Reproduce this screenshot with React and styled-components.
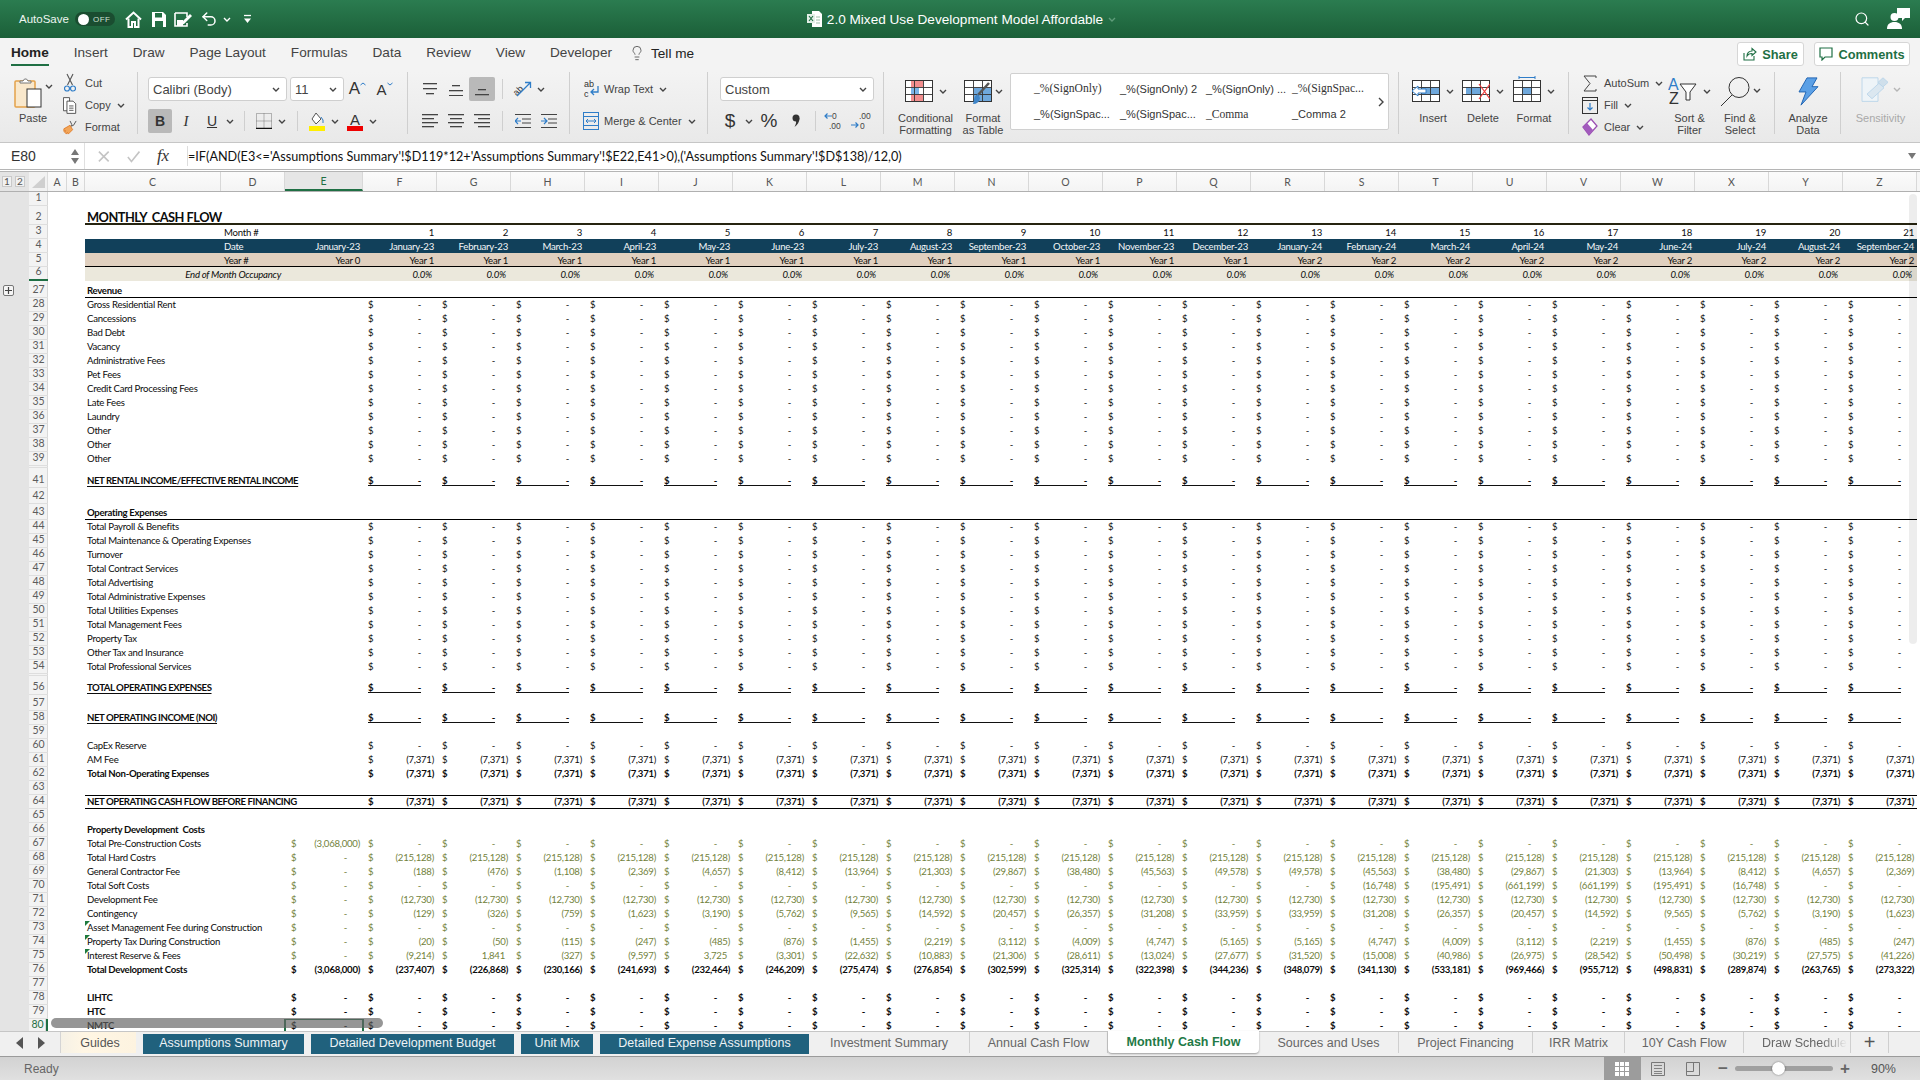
import React from 'react';
import styled, { createGlobalStyle } from 'styled-components';
import { Undo2, Search, Lightbulb } from 'lucide-react';

const UI = '"Liberation Sans", Arial, sans-serif';
const SHEET = 'Lato, "Open Sans", sans-serif';

const Global = createGlobalStyle`
  html, body { margin: 0; padding: 0; background: #fff; overflow: hidden; }
  * { box-sizing: border-box; }
`;

const Page = styled.div`
  width: 1920px; height: 1080px; display: flex; flex-direction: column; overflow: hidden;
  font-family: ${UI}; color: #333; position: relative;
`;

/* ---------- title bar ---------- */
const TitleBar = styled.header`
  height: 38px; flex: none; display: grid; grid-template-columns: 1fr auto 1fr; align-items: center;
  background: linear-gradient(#2b7c50, #1b5f38); color: #fff;
`;
const TitleLeft = styled.div`display: flex; align-items: center; padding-left: 19px;`;
const AutoSave = styled.span`font-size: 11.5px; width: 56px; color: #eef5f0;`;
const Toggle = styled.span`
  width: 40px; height: 14px; border-radius: 7px; background: #1a4d30; display: flex; align-items: center;
  padding-left: 2px; gap: 4px; font-size: 8px; letter-spacing: .5px; color: #cfe0d5;
  &::before { content: ''; width: 11px; height: 11px; border-radius: 50%; background: #fff; margin-left: 1px; }
`;
const TitleIcon = styled.span`
  width: ${p => p.$w || 25}px; margin-left: ${p => p.$ml || 0}px; display: flex; justify-content: center; align-items: center;
`;
const TitleCenter = styled.div`display: flex; align-items: center; gap: 5px; font-size: 13.6px; padding-left: 3px;`;
const TitleRight = styled.div`display: flex; align-items: center; justify-content: flex-end; gap: 16px; padding-right: 9px;`;

/* ---------- ribbon tabs ---------- */
const TabsRow = styled.div`
  height: 34px; flex: none; display: flex; padding: 4px 10px 0 11px; gap: 25px; background: #f3f3f3;
`;
const RibbonTab = styled.span`
  height: 24px; line-height: 22px; font-size: 13.6px; color: ${p => p.$active ? '#222' : '#444'};
  font-weight: ${p => p.$active ? 700 : 400}; border-bottom: 2px solid ${p => p.$active ? '#1f6f44' : 'transparent'};
`;
const TellMe = styled.span`
  display: flex; align-items: center; gap: 6px; height: 22px; font-size: 13.6px; color: #222; margin-left: -8px;
`;
const ShareGroup = styled.div`margin-left: auto; display: flex; gap: 10px;`;
const ShareButton = styled.span`
  height: 24px; width: ${p => p.$w}px; background: #fff; border: 1px solid #d6d6d6; border-radius: 3px; display: flex;
  align-items: center; justify-content: center; gap: 5px; font-size: 12.8px; font-weight: 700; color: #1f6f44;
`;

/* ---------- ribbon ---------- */
const Ribbon = styled.div`
  height: 71px; flex: none; display: flex; align-items: flex-start; background: linear-gradient(#f3f3f3, #e9e9e9);
  border-bottom: 1px solid #c6c6c6;
`;
const Group = styled.div`
  width: ${p => p.$w}px; height: 62px; flex: none; display: flex; padding-left: ${p => p.$pl || 0}px;
  border-right: ${p => p.$last ? 'none' : '1px solid #cfcfcf'};
`;
const Stack = styled.div`display: flex; flex-direction: column; padding-top: 5px; gap: 8px;`;
const ToolRow = styled.div`display: flex; align-items: center; height: 24px; flex: none;`;
const Big = styled.div`
  width: ${p => p.$w}px; margin-left: ${p => p.$ml || 0}px; flex: none; display: flex; flex-direction: column; align-items: center; padding-top: 6px;
`;
const BigIcon = styled.div`
  height: ${p => 34 - (p.$shift || 0)}px; margin-top: ${p => p.$shift || 0}px; flex: none; display: flex; align-items: flex-start; gap: ${p => p.$gap ?? 6}px;
`;
const ChevBox = styled.span`height: ${p => p.$h || 22}px; display: flex; align-items: center;`;
const BigLabel = styled.div`
  font-size: 11px; line-height: 12px; text-align: center; white-space: nowrap; color: ${p => p.$muted ? '#a9a9a9' : '#444'};
`;
const SmallCol = styled.div`display: flex; flex-direction: column; flex: none; margin-left: ${p => p.$ml || 0}px; width: ${p => p.$w ? p.$w + 'px' : 'auto'};`;
const SmallRow = styled.div`display: flex; align-items: center; height: 22px; flex: none; font-size: 11px; color: #444; white-space: nowrap;`;
const SmallIcon = styled.span`width: ${p => p.$w || 14}px; margin-right: ${p => p.$mr || 8}px; display: flex; justify-content: center; align-items: center;`;
const ChevAfter = styled.span`margin-left: ${p => p.$ml || 6}px; display: flex; align-items: center;`;
const SelectBox = styled.div`
  width: ${p => p.$w}px; margin-left: ${p => p.$ml || 0}px; height: 24px; background: #fff; border: 1px solid #cfcfcf; border-radius: 3px;
  display: flex; align-items: center; justify-content: space-between; padding: 0 6px 0 4px; font-size: 13px; color: #444; flex: none;
`;
const Cell = styled.span`
  width: ${p => p.$w || 24}px; margin-left: ${p => p.$ml || 0}px; height: 24px; flex: none; display: flex; align-items: center; justify-content: center;
  border-radius: 2px; background: ${p => p.$on ? '#b9b9b9' : 'transparent'}; font-size: ${p => p.$fs || 14}px; color: #333;
  font-weight: ${p => p.$b ? 700 : 400}; font-style: ${p => p.$i ? 'italic' : 'normal'}; font-family: ${p => p.$serif ? '"Liberation Serif", serif' : 'inherit'};
  text-decoration: ${p => p.$u ? 'underline' : 'none'};
`;
const Divider = styled.span`width: 1px; height: 20px; background: #cfcfcf; margin-left: ${p => p.$ml || 0}px; flex: none;`;
const Gallery = styled.div`
  width: 379px; height: 57px; margin: 1px 0 0 2px; background: #fff; border: 1px solid #d0d0d0; border-radius: 2px; flex: none;
  display: grid; grid-template-columns: repeat(4, 86px) 1fr; grid-template-rows: 1fr 1fr; padding: 2px 0 2px 23px; align-items: center;
`;
const StyleName = styled.span`
  font-size: ${p => p.$serif ? 11.6 : 11}px; font-family: ${p => p.$serif ? '"Liberation Serif", serif' : UI}; color: #333; white-space: nowrap;
`;
const GalleryArrow = styled.span`grid-column: 5; grid-row: 1 / span 2; justify-self: end; margin-right: 5px; display: flex;`;

/* ---------- formula bar ---------- */
const FormulaBar = styled.div`
  height: 29px; flex: none; display: flex; background: #fff; border-bottom: 3px double #b5b5b5; align-items: stretch;
`;
const NameBox = styled.div`
  width: 85px; border-right: 1px solid #e0e0e0; display: flex; align-items: center; justify-content: space-between; padding: 0 5px 0 11px;
  font-size: 14px; color: #333;
`;
const Stepper = styled.span`display: flex; flex-direction: column; gap: 3px;`;
const FormulaTools = styled.div`width: 103px; display: flex; align-items: center; padding-left: 13px; gap: 17px; flex: none;`;
const FxGlyph = styled.span`font-family: "Liberation Serif", serif; font-style: italic; font-size: 17px; color: #333; width: 16px;`;
const FxSep = styled.span`width: 1px; height: 20px; background: #ddd; margin-left: -1px;`;
const FormulaText = styled.div`
  flex: 1; font-family: ${SHEET}; font-size: 12.65px; letter-spacing: 0; color: #111; white-space: nowrap; display: flex; align-items: center;
`;
const FormulaDrop = styled.span`margin-right: 4px; display: flex; align-items: center;`;

/* ---------- sheet ---------- */
const TEMPLATE = '29px 19px 19px 18px 136px 64px 78px repeat(21, 74px)';
const ColHeader = styled.div`
  height: 20px; flex: none; display: grid; grid-template-columns: ${TEMPLATE}; background: #f6f6f6; border-bottom: 1px solid #b0b0b0;
`;
const OutlineTop = styled.div`background: #e4e4e4; display: flex; align-items: center; padding-left: 2px; gap: 3px;`;
const LevelBtn = styled.span`
  width: 10px; height: 11px; background: #f1f1f1; border: 1px solid #c9c9c9; font: 10px/9px ${SHEET}; text-align: center; color: #555;
`;
const Corner = styled.div`display: flex; align-items: center; justify-content: center; background: #f2f2f2; border-right: 1px solid #ddd;`;
const ColCell = styled.div`
  display: flex; align-items: center; justify-content: center; font: 10.5px ${SHEET};
  color: ${p => p.$on ? '#1f6f44' : '#555'}; background: ${p => p.$on ? '#e6e6e6' : 'linear-gradient(#fbfbfb,#f4f4f4)'};
  border-right: 1px solid #d8d8d8; border-bottom: ${p => p.$on ? '2px solid #1f6f44' : 'none'};
`;
const Sheet = styled.div`flex: 1; position: relative; overflow: hidden; background: #fff; min-height: 0;`;
const RowShell = styled.div`
  height: ${p => p.$h}px; display: grid; grid-template-columns: 29px 19px 37px 1832px; overflow: hidden;
`;
const Outline = styled.div`background: #e4e4e4; display: flex; align-items: flex-end; padding: 0 0 2px 3px;`;
const PlusBtn = styled.span`
  width: 11px; height: 11px; border: 1px solid #777; border-radius: 2px; background: #f5f5f5; display: flex; align-items: center; justify-content: center;
`;
const RowNum = styled.div`
  background: #f3f3f3; display: flex; align-items: flex-end; justify-content: center; font: 10.5px/15px ${SHEET};
  color: ${p => p.$sel ? '#1f6f44' : '#5c5c5c'}; overflow: hidden;
  border-bottom: ${p => p.$green ? '2px solid #1f6f44' : '1px solid #dedede'};
  border-right: ${p => p.$sel ? '2px solid #1f6f44' : 'none'};
  box-shadow: inset -1px 0 0 #d8d8d8;
`;
const DataRow = styled.div`
  display: grid; grid-template-columns: 136px 64px 78px repeat(21, 74px); align-items: end; color: ${p => p.$color || '#0c0c0c'};
  font-family: ${SHEET}; font-size: 9.6px; letter-spacing: ${p => p.$bold ? -0.3 : -0.25}px; line-height: ${p => p.$lh || 14}px; height: 100%;
  background: ${p => p.$bg || 'transparent'}; font-weight: ${p => p.$bold ? 700 : 400}; font-style: ${p => p.$italic ? 'italic' : 'normal'};
  box-shadow: ${p => p.$lines || 'none'};
`;
const Label = styled.div`
  height: 14px; padding-left: 2px; white-space: pre; position: relative; font-weight: ${p => p.$bold ? 700 : 'inherit'};
  letter-spacing: ${p => p.$caps ? '-0.45px' : 'inherit'};
  text-decoration: ${p => p.$under ? 'underline' : 'none'}; text-underline-offset: 1.5px;
  color: ${p => p.$dark ? '#0c0c0c' : 'inherit'};
  ${p => p.$tri && `&::before { content: ''; position: absolute; left: 0; top: 0; border-style: solid; border-width: 5px 5px 0 0; border-color: #1f7a3d transparent transparent transparent; }`}
`;
const Title = styled(Label)`font-size: 12.8px; font-weight: 700; letter-spacing: -0.5px; height: 16px; line-height: 16px;`;
const TextCell = styled.div`
  height: 14px; white-space: nowrap; text-align: ${p => p.$align || 'right'};
  padding: ${p => p.$align === 'left' ? '0 0 0 3px' : `0 ${p.$pr ?? 3}px 0 0`};
  direction: ${p => p.$rtl ? 'rtl' : 'ltr'};
`;
const Acct = styled.div`
  height: 14px; display: flex; justify-content: space-between; position: relative; padding: 0 ${p => p.$pr}px 0 ${p => p.$pl || 5}px;
  font-weight: inherit;
  ${p => p.$under && `&::after { content: ''; position: absolute; left: 5px; width: 53px; bottom: 2px; height: 1px; background: #111; }`}
`;
const Selected = styled.div`
  position: absolute; inset: -1px -1px -6px -1px; border: 2px solid #1f6f44; z-index: 3;
`;
const SelCell = styled.div`position: relative; height: 14px;`;
const HScroll = styled.div`
  position: absolute; left: 51px; top: 826px; width: 332px; height: 10px; border-radius: 5px; background: rgba(100,100,100,.68); z-index: 4;
`;
const VScroll = styled.div`
  position: absolute; left: 1909px; top: 2px; width: 8px; height: 450px; border-radius: 4px; background: rgba(0,0,0,.07); z-index: 4;
`;

/* ---------- sheet tabs / status ---------- */
const TabBar = styled.div`
  height: 26px; flex: none; display: flex; background: #f0f0f0; border-top: 1px solid #c6c6c6; border-bottom: 1px solid #9b9b9b; font-size: 12.5px; z-index: 5;
`;
const NavArrows = styled.div`width: 61px; display: flex; align-items: center; justify-content: center; gap: 15px; border-right: 1px solid #d4d4d4; height: 21px; padding-left: 0;`;
const GuidesTab = styled.div`
  width: 75px; height: 21px; padding-left: 3px; display: flex; align-items: center; justify-content: center; background: linear-gradient(90deg, #f5f1e6, #fff6e4 30%, #fdf3e0); color: #555;
`;
const ColorTab = styled.div`
  width: ${p => p.$w}px; height: 20px; margin: 2px 0 0 7px; background: #20617d; color: #eef3f6; display: flex; align-items: center; justify-content: center; padding-bottom: 3px;
`;
const PlainTab = styled.div`
  width: ${p => p.$w}px; height: 21px; display: flex; align-items: center; justify-content: center; color: #666; border-right: 1px solid #cfcfcf; flex: none;
`;
const ActiveTab = styled.div`
  width: 151px; height: 22px; background: #fff; margin-top: -1px; border-radius: 0 0 4px 4px; box-shadow: 0 1px 2px rgba(0,0,0,.35); display: flex; align-items: center; justify-content: center;
  color: #1f7a47; font-weight: 700; flex: none;
`;
const FadeTab = styled(PlainTab)`justify-content: flex-start; padding-left: 18px; overflow: hidden;`;
const Fade = styled.span`
  white-space: nowrap; -webkit-mask-image: linear-gradient(90deg, #000 70%, transparent 100%); mask-image: linear-gradient(90deg, #000 70%, transparent 100%);
`;
const PlusTab = styled(PlainTab)`font-size: 20px; font-weight: 400; color: #555;`;
const StatusBar = styled.footer`
  height: 23px; flex: none; display: flex; align-items: stretch; background: linear-gradient(#d2d2d2, #e0e0e0); font-size: 12px; color: #666;
`;
const Ready = styled.span`padding-left: 24px; align-self: center;`;
const StatusRight = styled.div`margin-left: auto; display: flex; align-items: center; padding-right: 24px; color: #555;`;
const ViewBtn = styled.span`
  width: ${p => p.$w}px; height: 100%; display: flex; align-items: center; justify-content: center; background: ${p => p.$on ? '#9c9c9c' : 'transparent'}; flex: none;
`;
const ZoomStep = styled.span`width: ${p => p.$w}px; text-align: center; font-size: 17px; font-weight: 700; line-height: 17px; color: #666;`;
const Slider = styled.span`width: 98px; height: 5px; border-radius: 3px; background: #a0a0a0; position: relative; flex: none;
  &::after { content: ''; position: absolute; left: 37px; top: -4px; width: 13px; height: 13px; border-radius: 50%; background: #fff; box-shadow: 0 0 2px rgba(0,0,0,.5); }
`;
const ZoomText = styled.span`margin-left: 14px; font-size: 12.5px; color: #555;`;

/* ---------- icons ---------- */
const Chev = ({ c = '#444' }) => <svg width="8" height="5" viewBox="0 0 8 5"><path d="M1 1l3 3 3-3" fill="none" stroke={c} strokeWidth="1.4" /></svg>;
const Home = () => <svg width="19" height="19" viewBox="0 0 19 19" fill="none" stroke="#fff" strokeWidth="2"><path d="M2 9.5L9.5 2.5 17 9.5" /><path d="M4.5 8.5V17H8v-5h3v5h3.5V8.5" /></svg>;
const Save = () => <svg width="16" height="17" viewBox="0 0 16 17"><path fill="#fff" d="M1 1h11l3 3v12H1z" /><rect x="4" y="2" width="7" height="4.5" fill="#236e44" /><rect x="4" y="10" width="8" height="6" fill="#236e44" /></svg>;
const SaveAs = () => <svg width="19" height="17" viewBox="0 0 19 17" fill="none"><path d="M1 2h12v4M1 2v13h12v-3" stroke="#fff" strokeWidth="1.6" /><rect x="3" y="9" width="6" height="6" fill="#fff" /><path d="M8 11l8-8 2 2-8 8-3 1z" fill="#fff" /></svg>;
const DocX = () => <svg width="15" height="16" viewBox="0 0 15 16"><path fill="#fff" d="M5 0h7l3 3v13H5z" /><rect x="0" y="3" width="8" height="9" fill="#e3efe7" /><path d="M2 5l4 5M6 5l-4 5" stroke="#1f6f44" strokeWidth="1.2" /><path d="M9 6h4M9 9h4M9 12h4" stroke="#9dbfa9" /></svg>;
const Customize = () => <svg width="9" height="11" viewBox="0 0 9 11"><path d="M1 1.5h7" stroke="#fff" strokeWidth="1.3" /><path d="M1 4.5h7L4.5 9z" fill="#fff" /></svg>;
const Person = () => <svg width="25" height="22" viewBox="0 0 25 22"><path fill="#fff" d="M11 0h13v10h-5l-3 3v-3h-5z" /><circle cx="8.5" cy="9" r="4" fill="#fff" /><path fill="#fff" d="M1 21c0-5 3-7 7.500-7s7.500 2 7.500 7z" /></svg>;
const ShareIco = () => <svg width="14" height="14" viewBox="0 0 14 14" fill="none" stroke="#1f6f44" strokeWidth="1.1"><path d="M1 6v7h10V9" /><path d="M4 9c0-3 2-5 5-5V1.500l4 3.500-4 3.500V6.500c-2 0-4 .8-5 2.500z" /></svg>;
const CommentIco = () => <svg width="14" height="14" viewBox="0 0 14 14" fill="none" stroke="#1f6f44" strokeWidth="1.2"><path d="M1 1h12v9H6l-3 3v-3H1z" /></svg>;
const PasteIco = () => <svg width="28" height="30" viewBox="0 0 28 30"><rect x="1" y="3" width="20" height="26" rx="1" fill="#f9e8cc" stroke="#e3a14a" strokeWidth="1.5" /><path d="M6 5V3h3l1.500-2h2L14 3h3v2z" fill="#fff" stroke="#777" /><rect x="13" y="11" width="14" height="18" fill="#fff" stroke="#333" /></svg>;
const CutIco = () => <svg width="12" height="20" viewBox="0 0 12 20" fill="none"><path d="M3 1l5.500 11M9 1L3.500 12" stroke="#555" strokeWidth="1.1" /><circle cx="3" cy="15.500" r="2.500" stroke="#2f7dc8" strokeWidth="1.2" /><circle cx="9" cy="15.500" r="2.500" stroke="#2f7dc8" strokeWidth="1.200" /></svg>;
const CopyIco = () => <svg width="16" height="19" viewBox="0 0 16 19" fill="#fff" stroke="#444"><path d="M.5.500h7v15h-7z" /><path d="M4.500 4.500h7l3 3v11h-10z" /><path d="M7 10h5M7 12.500h5M7 15h5" fill="none" /></svg>;
const PainterIco = () => <svg width="16" height="17" viewBox="0 0 16 17"><path d="M8 1l2 4-1 2 3-1 3-5" fill="none" stroke="#555" strokeWidth="1.100" /><path d="M1 10l7-4 3 5-5 5-1-2-1 2-2-2 1-2-2 1z" fill="#f2a65a" stroke="#e07b28" /></svg>;
const FontGrow = ({ down }) => <Cell $w={27} $fs={down ? 15 : 17}>A<svg width="6" height="4" viewBox="0 0 6 4" style={{ alignSelf: 'flex-start', marginTop: 5 }}><path d={down ? 'M.5 1L3 3l2.500-2' : 'M.5 3L3 1l2.500 2'} fill="none" stroke="#2f7dc8" /></svg></Cell>;
const BorderIco = () => <svg width="16" height="16" viewBox="0 0 16 16" fill="none"><path d="M.5.500h15v15H.5z M8 .5v15 M.5 8h15" stroke="#777" strokeDasharray="1 1" /><path d="M0 15.500h16" stroke="#111" strokeWidth="1.500" /></svg>;
const FillIco = () => <svg width="18" height="19" viewBox="0 0 18 19"><path d="M8 1l5 6-5 5-4-5z" fill="#fff" stroke="#555" /><path d="M13 5q3 3 2 6" stroke="#2f7dc8" fill="none" /><rect x="1" y="14" width="16" height="5" fill="#ffee00" /></svg>;
const ColorA = () => <svg width="18" height="19" viewBox="0 0 18 19"><text x="9" y="12.500" fontSize="15" textAnchor="middle" fill="#333" fontFamily={UI}>A</text><rect x="1" y="14" width="16" height="5" fill="#ee0000" /></svg>;
const Lines = ({ ys, ws = [], w = 16, anchor = 'left', h = 14 }) => (
  <svg width={w} height={h} viewBox={`0 0 ${w} ${h}`}>
    {ys.map((y, i) => {
      const l = ws[i] ?? w;
      const x = anchor === 'left' ? 0 : anchor === 'right' ? w - l : (w - l) / 2;
      return <rect key={i} x={x} y={y} width={l} height="1.300" fill="#444" />;
    })}
  </svg>
);
const OrientIco = () => <svg width="20" height="18" viewBox="0 0 20 18"><text x="1" y="14" fontSize="9" fill="#333" fontFamily={UI} transform="rotate(-45 5 12)">ab</text><path d="M4 16L17 3M12 2.500h5.500V8" fill="none" stroke="#2f7dc8" strokeWidth="1.300" /></svg>;
const IndentIco = ({ out }) => <svg width="16" height="14" viewBox="0 0 16 14"><path d="M0 .5h16M7 5h9M7 9h9M0 13.500h16" stroke="#444" /><path d={out ? 'M6 7H0M3 4L0 7l3 3' : 'M0 7h6M3 4l3 3-3 3'} fill="none" stroke="#2f7dc8" strokeWidth="1.200" /></svg>;
const WrapIco = () => <svg width="18" height="20" viewBox="0 0 18 20"><text x="2" y="8" fontSize="9" fill="#333" fontFamily={UI}>ab</text><text x="2" y="18" fontSize="9" fill="#333" fontFamily={UI}>c</text><path d="M16 7v6h-7M12 10l-3 3 3 3" fill="none" stroke="#2f7dc8" strokeWidth="1.300" /></svg>;
const MergeIco = () => <svg width="16" height="18" viewBox="0 0 16 18" fill="none"><rect x=".5" y=".5" width="15" height="17" stroke="#2f7dc8" /><path d="M0 4.500h16M0 13.500h16" stroke="#2f7dc8" /><path d="M3 9h10M5 7L3 9l2 2M11 7l2 2-2 2" stroke="#2f7dc8" /></svg>;
const CommaIco = () => <svg width="9" height="14" viewBox="0 0 9 14"><circle cx="5" cy="4" r="3.500" fill="#333" /><path d="M8.500 4c0 4-2 7-5 9 1-2 2-4 1.500-6z" fill="#333" /></svg>;
const DecIco = ({ more }) => <svg width="24" height="20" viewBox="0 0 24 20"><text x="9" y="8" fontSize="8.500" fill="#444" fontFamily={UI}>{more ? '0' : '.00'}</text><text x={more ? 6 : 10} y="18" fontSize="8.500" fill="#444" fontFamily={UI}>{more ? '.00' : '0'}</text><path d={more ? 'M9 5H2M4.500 2.500L2 5l2.500 2.500' : 'M1 14h7M5.500 11.500L8 14l-2.500 2.500'} fill="none" stroke="#2f7dc8" strokeWidth="1.200" /></svg>;
const GridLines = ({ h = 22, y0 = 0 }) => (<>
  <rect x=".5" y={y0 + .5} width="27" height={h - 1} fill="none" stroke="#333" />
  <path d={`M9.500 ${y0}V${y0 + h}M18.500 ${y0}V${y0 + h}M0 ${y0 + 7.5}H28M0 ${y0 + 14.5}H28`} stroke="#333" fill="none" strokeWidth=".9" />
</>);
const CondIco = () => <svg width="28" height="22" viewBox="0 0 28 22"><rect width="28" height="22" fill="#fff" /><path fill="#f28e8e" d="M6 0h12v7H6zM6 14h12v8H6z" /><rect x="6" y="8" width="8" height="6" fill="#7ab5e8" /><GridLines /></svg>;
const TableIco = () => <svg width="28" height="25" viewBox="0 0 28 25"><rect width="28" height="22" fill="#fff" /><path fill="#6fa8dc" d="M10 8h17v13H10z" /><GridLines /><path d="M25 3L13 16" stroke="#555" strokeWidth="2.500" /><path d="M14 14q-4 2-4 6l-1 4q6 0 7-6z" fill="#3f85c8" /></svg>;
const InsertIco = () => <svg width="28" height="26" viewBox="0 0 28 26"><rect width="28" height="22" fill="#fff" /><rect x="9" y="7" width="19" height="8" fill="#6fa8dc" /><GridLines /><path d="M14 9H6V6L0 11l6 5v-3h8z" fill="#fff" stroke="#2f7dc8" /></svg>;
const DeleteIco = () => <svg width="28" height="26" viewBox="0 0 28 26"><rect width="28" height="22" fill="#fff" /><rect x="4" y="7" width="15" height="8" fill="#6fa8dc" /><GridLines /><path d="M17 4l11 15M28 4L17 19" stroke="#ee3b3b" strokeWidth="1.200" /></svg>;
const FormatIco = () => <svg width="28" height="30" viewBox="0 0 28 30"><path d="M6 1.500h16M6 0v3M22 0v3" stroke="#2f7dc8" /><rect y="4" width="28" height="22" fill="#fff" /><rect x="9" y="11" width="10" height="8" fill="#6fa8dc" /><GridLines y0={4} /></svg>;
const SigmaIco = () => <svg width="14" height="17" viewBox="0 0 14 17" fill="none"><path d="M13 3V1H1l6 7.500L1 16h12v-2" stroke="#444" /></svg>;
const FillDown = () => <svg width="16" height="17" viewBox="0 0 16 17" fill="none"><rect x=".5" y=".5" width="15" height="16" stroke="#333" /><path d="M0 3.500h16" stroke="#333" /><path d="M8 6v7M5.500 10.500L8 13l2.500-2.500" stroke="#2f7dc8" strokeWidth="1.200" /></svg>;
const EraserIco = () => <svg width="16" height="18" viewBox="0 0 16 18"><path d="M1 9l8-8 6 7-8 9z" fill="#fff" stroke="#9b4fb3" strokeWidth="1.300" /><path d="M1 9l4-4 6 7-4 5z" fill="#a25bbd" /></svg>;
const SortIco = () => <svg width="30" height="28" viewBox="0 0 30 28"><text x="0" y="12" fontSize="16" fill="#2f7dc8" fontFamily={UI}>A</text><text x="1" y="26" fontSize="16" fill="#333" fontFamily={UI}>Z</text><path d="M12 6h16l-6 8v8h-4v-8z" fill="#fff" stroke="#333" /></svg>;
const FindIco = () => <svg width="30" height="30" viewBox="0 0 30 30" fill="none"><circle cx="19" cy="10.500" r="10" stroke="#333" /><path d="M12 18L1 29" stroke="#333" /></svg>;
const BoltIco = () => <svg width="22" height="29" viewBox="0 0 22 33" preserveAspectRatio="none"><path d="M10 1h10l-5 10h6L4 32l5-15H2z" fill="#5ba0e6" stroke="#1d61b0" /></svg>;
const SensIco = () => <svg width="28" height="29" viewBox="0 0 28 32" fill="none" preserveAspectRatio="none"><path d="M1 2h16v26H1z" fill="#eef4f8" stroke="#bcd6ea" /><path d="M6 20L18 8l5 5-12 12z" fill="#dbe7f0" stroke="#bcd6ea" /><path d="M17 7l5-5 5 5-5 5z" fill="#cfdfeb" stroke="#bcd6ea" /></svg>;
const GridView = () => <svg width="14" height="14" viewBox="0 0 14 14"><path fill="#fff" d="M0 0h4v4H0zM5 0h4v4H5zM10 0h4v4h-4zM0 5h4v4H0zM5 5h4v4H5zM10 5h4v4h-4zM0 10h4v4H0zM5 10h4v4H5zM10 10h4v4h-4z" /></svg>;
const PageView = () => <svg width="14" height="14" viewBox="0 0 14 14" fill="none" stroke="#777"><path d="M.5.5h13v13H.5z" /><path d="M3 3.500h8M3 6.500h8M3 9.500h8M3 11.500h8" strokeWidth=".9" /></svg>;
const BreakView = () => <svg width="14" height="14" viewBox="0 0 14 14" fill="none" stroke="#777"><path d="M.5.5h13v13H.5zM.5 9.500h7V.5" /></svg>;
const NavLeft = () => <svg width="7" height="12" viewBox="0 0 7 12"><path d="M7 0v12L0 6z" fill="#555" /></svg>;
const NavRight = () => <svg width="7" height="12" viewBox="0 0 7 12"><path d="M0 0v12l7-6z" fill="#555" /></svg>;
const ArrowR = () => <svg width="6" height="10" viewBox="0 0 6 10"><path d="M1 1l4 4-4 4" fill="none" stroke="#444" strokeWidth="1.400" /></svg>;
const Tri = ({ up }) => <svg width="8" height="6" viewBox="0 0 8 6"><path d={up ? 'M4 0l4 6H0z' : 'M0 0h8L4 6z'} fill="#777" /></svg>;
const Plus = () => <svg width="7" height="7" viewBox="0 0 7 7"><path d="M3.500 0v7M0 3.500h7" stroke="#444" strokeWidth="1.200" /></svg>;

/* ---------- data ---------- */
const COLS = 'FGHIJKLMNOPQRSTUVWXYZ'.split('');
const MONTHS = ['January-23','February-23','March-23','April-23','May-23','June-23','July-23','August-23','September-23','October-23','November-23','December-23','January-24','February-24','March-24','April-24','May-24','June-24','July-24','August-24','September-24'];
const fmt = v => { if (v === 0) return '-'; const s = Math.abs(v).toLocaleString('en-US'); return v < 0 ? `(${s})` : s; };
const neg = a => a.map(v => -v);
const dashes = Array(21).fill(0);
const same = v => Array(21).fill(v);
const NEG7371 = same(-7371);
const OLIVE = '#72823c';
const B = '#000';
const lineBottom = (w = 1, c = B) => `inset 0 -${w}px 0 ${c}`;

const rowsData = [
  { n: 1, h: 14 },
  { n: 2, h: 19, kind: 'title', lines: lineBottom(2, '#262410') },
  { n: 3, h: 14, kind: 'head', d: 'Month #', e: '', months: MONTHS.map((_, i) => String(i + 1)) },
  { n: 4, h: 14, kind: 'head', d: 'Date', e: 'January-23', months: MONTHS, bg: '#11405a', color: '#f4f7f8' },
  { n: 5, h: 14, kind: 'head', d: 'Year #', e: 'Year 0', months: MONTHS.map((_, i) => i < 12 ? 'Year 1' : 'Year 2'), bg: '#e0d0bf', lines: lineBottom() },
  { n: 6, h: 14, kind: 'occ', bg: '#ebe8dc', green: true },
  { n: 27, h: 17, label: 'Revenue', bold: true, lines: lineBottom(), plus: true },
  ...['Gross Residential Rent','Cancessions','Bad Debt','Vacancy','Administrative Fees','Pet Fees','Credit Card Processing Fees','Late Fees','Laundry','Other','Other','Other'].map((label, i) => ({ n: 28 + i, h: 14, label, vals: dashes })),
  { n: 40, h: 2 },
  { n: 41, h: 20, label: 'NET RENTAL INCOME/EFFECTIVE RENTAL INCOME', bold: true, caps: true, under: true, vals: dashes },
  { n: 42, h: 16 },
  { n: 43, h: 16, label: 'Operating Expenses', bold: true, lines: lineBottom() },
  ...['Total Payroll & Benefits','Total Maintenance & Operating Expenses','Turnover','Total Contract Services','Total Advertising','Total Administrative Expenses','Total Utilities Expenses','Total Management Fees','Property Tax','Other Tax and Insurance','Total Professional Services'].map((label, i) => ({ n: 44 + i, h: 14, label, vals: dashes })),
  { n: 55, h: 2 },
  { n: 56, h: 19, label: 'TOTAL OPERATING EXPENSES', bold: true, caps: true, under: true, vals: dashes },
  { n: 57, h: 16 },
  { n: 58, h: 14, label: 'NET OPERATING INCOME (NOI)', bold: true, caps: true, under: true, vals: dashes },
  { n: 59, h: 14 },
  { n: 60, h: 14, label: 'CapEx Reserve', vals: dashes },
  { n: 61, h: 14, label: 'AM Fee', vals: NEG7371 },
  { n: 62, h: 14, label: 'Total Non-Operating Expenses', bold: true, vals: NEG7371 },
  { n: 63, h: 14 },
  { n: 64, h: 14, label: 'NET OPERATING CASH FLOW BEFORE FINANCING', bold: true, caps: true, vals: NEG7371, lines: `inset 0 1px 0 ${B}, inset 0 -1px 0 ${B}` },
  { n: 65, h: 14 },
  { n: 66, h: 14, label: 'Property Development  Costs', bold: true },
  { n: 67, h: 14, label: 'Total Pre-Construction Costs', color: OLIVE, dark: true, e: -3068000, vals: dashes },
  { n: 68, h: 14, label: 'Total Hard Costrs', color: OLIVE, dark: true, e: 0, vals: same(-215128) },
  { n: 69, h: 14, label: 'General Contractor Fee', color: OLIVE, dark: true, e: 0, vals: neg([188,476,1108,2369,4657,8412,13964,21303,29867,38480,45563,49578,49578,45563,38480,29867,21303,13964,8412,4657,2369]) },
  { n: 70, h: 14, label: 'Total Soft Costs', color: OLIVE, dark: true, e: 0, vals: neg([0,0,0,0,0,0,0,0,0,0,0,0,0,16748,195491,661199,661199,195491,16748,0,0]) },
  { n: 71, h: 14, label: 'Development Fee', color: OLIVE, dark: true, e: 0, vals: same(-12730) },
  { n: 72, h: 14, label: 'Contingency', color: OLIVE, dark: true, e: 0, vals: neg([129,326,759,1623,3190,5762,9565,14592,20457,26357,31208,33959,33959,31208,26357,20457,14592,9565,5762,3190,1623]) },
  { n: 73, h: 14, label: 'Asset Management Fee during Construction', tri: true, color: OLIVE, dark: true, e: 0, vals: dashes },
  { n: 74, h: 14, label: 'Property Tax During Construction', tri: true, color: OLIVE, dark: true, e: 0, vals: neg([20,50,115,247,485,876,1455,2219,3112,4009,4747,5165,5165,4747,4009,3112,2219,1455,876,485,247]) },
  { n: 75, h: 14, label: 'Interest Reserve & Fees', tri: true, color: OLIVE, dark: true, e: 0, vals: [-9214,1841,-327,-9597,3725,-3301,-22632,-10883,-21306,-28611,-13024,-27677,-31520,-15008,-40986,-26975,-28542,-50498,-30219,-27575,-41226] },
  { n: 76, h: 14, label: 'Total Development Costs', bold: true, e: -3068000, vals: neg([237407,226868,230166,241693,232464,246209,275474,276854,302599,325314,322398,344236,348079,341130,533181,969466,955712,498831,289874,263765,273322]) },
  { n: 77, h: 14 },
  { n: 78, h: 14, label: 'LIHTC', bold: true, e: 0, vals: dashes },
  { n: 79, h: 14, label: 'HTC', bold: true, e: 0, vals: dashes },
  { n: 80, h: 14, label: 'NMTC', bold: true, e: 0, vals: dashes, sel: true },
];

const padFor = v => (v === 0 ? 16 : v < 0 ? 3 : 6);
const Money = ({ v, under, pl }) => (
  <Acct $pr={padFor(v)} $pl={pl} $under={under}><span>$</span><span>{fmt(v)}</span></Acct>
);

const SheetRow = ({ r }) => {
  const { n, h } = r;
  let body = null;
  if (r.kind === 'title') {
    body = <DataRow $lines={r.lines}><Title>{'MONTHLY  CASH FLOW'}</Title></DataRow>;
  } else if (r.kind === 'head') {
    body = (
      <DataRow $lh={15} $bg={r.bg} $color={r.color} $lines={r.lines}>
        <div />
        <TextCell $align="left">{r.d}</TextCell>
        <TextCell>{r.e}</TextCell>
        {r.months.map((m, i) => <TextCell key={i}>{m}</TextCell>)}
      </DataRow>
    );
  } else if (r.kind === 'occ') {
    body = (
      <DataRow $lh={15} $bg={r.bg} $italic>
        <div />
        <TextCell $rtl $pr={4}><bdi>End of Month Occupancy</bdi></TextCell>
        <div />
        {COLS.map(c => <TextCell key={c} $pr={5}>0.0%</TextCell>)}
      </DataRow>
    );
  } else {
    body = (
      <DataRow $lines={r.lines} $color={r.color} $bold={r.bold}>
        {r.label
          ? <Label $tri={r.tri} $under={r.under} $dark={r.dark} $caps={r.caps}>{r.label}</Label>
          : <div />}
        <div />
        {r.e === undefined ? <div /> : r.sel ? <SelCell><Money v={r.e} pl={6} /><Selected /></SelCell> : <Money v={r.e} pl={6} />}
        {r.vals && r.vals.map((v, i) => <Money key={i} v={v} under={r.under} />)}
      </DataRow>
    );
  }
  return (
    <RowShell $h={h}>
      <Outline>{r.plus && <PlusBtn><Plus /></PlusBtn>}</Outline>
      <RowNum $sel={r.sel} $green={r.green}>{n}</RowNum>
      <div />
      {body}
    </RowShell>
  );
};

const HEAD = ['A','B','C','D','E',...COLS];
const FORMULA = "=IF(AND(E3<='Assumptions Summary'!$D119*12+'Assumptions Summary'!$E22,E41>0),('Assumptions Summary'!$D$138)/12,0)";

export default function App() {
  return (
    <Page>
      <Global />
      <TitleBar>
        <TitleLeft>
          <AutoSave>AutoSave</AutoSave>
          <Toggle>OFF</Toggle>
          <TitleIcon $ml={6}><Home /></TitleIcon>
          <TitleIcon><Save /></TitleIcon>
          <TitleIcon><SaveAs /></TitleIcon>
          <TitleIcon><Undo2 size={18} color="#fff" strokeWidth={2} /></TitleIcon>
          <TitleIcon $w={11}><Chev c="#fff" /></TitleIcon>
          <TitleIcon $w={30}><Customize /></TitleIcon>
        </TitleLeft>
        <TitleCenter>
          <DocX />
          <span>2.0 Mixed Use Development Model Affordable</span>
          <Chev c="#5f9c7a" />
        </TitleCenter>
        <TitleRight>
          <Search size={16} color="#fff" strokeWidth={1.8} />
          <Person />
        </TitleRight>
      </TitleBar>

      <TabsRow>
        <RibbonTab $active>Home</RibbonTab>
        {['Insert','Draw','Page Layout','Formulas','Data','Review','View','Developer'].map(t => <RibbonTab key={t}>{t}</RibbonTab>)}
        <TellMe><Lightbulb size={16} color="#555" strokeWidth={1.3} />Tell me</TellMe>
        <ShareGroup>
          <ShareButton $w={67}><ShareIco />Share</ShareButton>
          <ShareButton $w={96}><CommentIco />Comments</ShareButton>
        </ShareGroup>
      </TabsRow>

      <Ribbon>
        <Group $w={138} $pl={7}>
          <Big $w={52}>
            <BigIcon $gap={3}><PasteIco /><ChevBox $h={16}><Chev /></ChevBox></BigIcon>
            <BigLabel>Paste</BigLabel>
          </Big>
          <SmallCol $ml={4}>
            <SmallRow><SmallIcon><CutIco /></SmallIcon>Cut</SmallRow>
            <SmallRow><SmallIcon><CopyIco /></SmallIcon>Copy<ChevAfter><Chev /></ChevAfter></SmallRow>
            <SmallRow><SmallIcon><PainterIco /></SmallIcon>Format</SmallRow>
          </SmallCol>
        </Group>

        <Group $w={270} $pl={10}>
          <Stack>
            <ToolRow>
              <SelectBox $w={139}>Calibri (Body)<Chev /></SelectBox>
              <SelectBox $w={54} $ml={3}>11<Chev /></SelectBox>
              <FontGrow />
              <FontGrow down />
            </ToolRow>
            <ToolRow>
              <Cell $on $b>B</Cell>
              <Cell $w={28} $i $serif $fs={15}>I</Cell>
              <Cell $u>U</Cell>
              <Cell $w={12}><Chev /></Cell>
              <Divider $ml={8} />
              <Cell $ml={7}><BorderIco /></Cell>
              <Cell $w={12}><Chev /></Cell>
              <Divider $ml={9} />
              <Cell $ml={7}><FillIco /></Cell>
              <Cell $w={12}><Chev /></Cell>
              <Cell $ml={2}><ColorA /></Cell>
              <Cell $w={12}><Chev /></Cell>
            </ToolRow>
          </Stack>
        </Group>

        <Group $w={162} $pl={9}>
          <Stack>
            <ToolRow>
              <Cell $w={26}><Lines ys={[1, 6, 11]} ws={[14, 14, 8]} anchor="center" /></Cell>
              <Cell $w={26}><Lines ys={[3, 8, 13]} ws={[8, 14, 14]} anchor="center" /></Cell>
              <Cell $w={26} $on><Lines ys={[7, 12]} ws={[8, 14]} anchor="center" /></Cell>
              <Divider $ml={7} />
              <Cell $ml={8}><OrientIco /></Cell>
              <Cell $w={12}><Chev /></Cell>
            </ToolRow>
            <ToolRow>
              <Cell $w={26}><Lines ys={[0, 4, 8, 12]} ws={[16, 12, 16, 12]} /></Cell>
              <Cell $w={26}><Lines ys={[0, 4, 8, 12]} ws={[16, 12, 16, 12]} anchor="center" /></Cell>
              <Cell $w={26}><Lines ys={[0, 4, 8, 12]} ws={[16, 12, 16, 12]} anchor="right" /></Cell>
              <Divider $ml={7} />
              <Cell $ml={8}><IndentIco out /></Cell>
              <Cell $ml={2}><IndentIco /></Cell>
            </ToolRow>
          </Stack>
        </Group>

        <Group $w={138} $pl={12}>
          <Stack>
            <ToolRow><SmallRow><SmallIcon $w={18} $mr={4}><WrapIco /></SmallIcon>Wrap Text<ChevAfter><Chev /></ChevAfter></SmallRow></ToolRow>
            <ToolRow><SmallRow><SmallIcon $w={18} $mr={4}><MergeIco /></SmallIcon>Merge &amp; Center<ChevAfter><Chev /></ChevAfter></SmallRow></ToolRow>
          </Stack>
        </Group>

        <Group $w={176} $pl={12}>
          <Stack>
            <ToolRow><SelectBox $w={154}>Custom<Chev /></SelectBox></ToolRow>
            <ToolRow>
              <Cell $w={20} $fs={19}>$</Cell>
              <Cell $w={12} $ml={3}><Chev /></Cell>
              <Cell $ml={2} $fs={19}>%</Cell>
              <Cell $w={20} $ml={4}><CommaIco /></Cell>
              <Divider $ml={10} />
              <Cell $w={26} $ml={6}><DecIco more /></Cell>
              <Cell $w={26} $ml={1}><DecIco /></Cell>
            </ToolRow>
          </Stack>
        </Group>

        <Group $w={515} $pl={14}>
          <Big $w={55}>
            <BigIcon $shift={2}><CondIco /><ChevBox><Chev /></ChevBox></BigIcon>
            <BigLabel>Conditional<br />Formatting</BigLabel>
          </Big>
          <Big $w={50} $ml={5}>
            <BigIcon $shift={2} $gap={3}><TableIco /><ChevBox><Chev /></ChevBox></BigIcon>
            <BigLabel>Format<br />as Table</BigLabel>
          </Big>
          <Gallery>
            <StyleName $serif>_%(SignOnly)</StyleName>
            <StyleName>_%(SignOnly) 2</StyleName>
            <StyleName>_%(SignOnly) ...</StyleName>
            <StyleName $serif>_%(SignSpac...</StyleName>
            <GalleryArrow><ArrowR /></GalleryArrow>
            <StyleName>_%(SignSpac...</StyleName>
            <StyleName>_%(SignSpac...</StyleName>
            <StyleName $serif>_Comma</StyleName>
            <StyleName>_Comma 2</StyleName>
          </Gallery>
        </Group>

        <Group $w={170} $pl={9}>
          <Big $w={50}>
            <BigIcon $shift={2}><InsertIco /><ChevBox><Chev /></ChevBox></BigIcon>
            <BigLabel>Insert</BigLabel>
          </Big>
          <Big $w={50}>
            <BigIcon $shift={2}><DeleteIco /><ChevBox><Chev /></ChevBox></BigIcon>
            <BigLabel>Delete</BigLabel>
          </Big>
          <Big $w={50} $ml={1}>
            <BigIcon $shift={-2}><FormatIco /><ChevBox $h={30}><Chev /></ChevBox></BigIcon>
            <BigLabel>Format</BigLabel>
          </Big>
        </Group>

        <Group $w={206} $pl={13}>
          <SmallCol $w={85}>
            <SmallRow><SmallIcon $w={16} $mr={6}><SigmaIco /></SmallIcon>AutoSum<ChevAfter><Chev /></ChevAfter></SmallRow>
            <SmallRow><SmallIcon $w={16} $mr={6}><FillDown /></SmallIcon>Fill<ChevAfter><Chev /></ChevAfter></SmallRow>
            <SmallRow><SmallIcon $w={16} $mr={6}><EraserIco /></SmallIcon>Clear<ChevAfter><Chev /></ChevAfter></SmallRow>
          </SmallCol>
          <Big $w={45}>
            <BigIcon $gap={5}><SortIco /><ChevBox $h={26}><Chev /></ChevBox></BigIcon>
            <BigLabel>Sort &amp;<br />Filter</BigLabel>
          </Big>
          <Big $w={42} $ml={7}>
            <BigIcon $shift={-1} $gap={3}><FindIco /><ChevBox $h={26}><Chev /></ChevBox></BigIcon>
            <BigLabel>Find &amp;<br />Select</BigLabel>
          </Big>
        </Group>

        <Group $w={66}>
          <Big $w={66}>
            <BigIcon $shift={-1}><BoltIco /></BigIcon>
            <BigLabel>Analyze<br />Data</BigLabel>
          </Big>
        </Group>

        <Group $w={79} $last>
          <Big $w={79}>
            <BigIcon $shift={-2} $gap={4}><SensIco /><ChevBox $h={26}><Chev c="#b5b5b5" /></ChevBox></BigIcon>
            <BigLabel $muted>Sensitivity</BigLabel>
          </Big>
        </Group>
      </Ribbon>

      <FormulaBar>
        <NameBox>E80<Stepper><Tri up /><Tri /></Stepper></NameBox>
        <FormulaTools>
          <svg width="13" height="13" viewBox="0 0 13 13"><path d="M1 1l11 11M12 1L1 12" stroke="#c4c4c4" strokeWidth="1.800" /></svg>
          <svg width="15" height="13" viewBox="0 0 15 13" fill="none"><path d="M1 7l4 5 9-11" stroke="#c4c4c4" strokeWidth="1.800" /></svg>
          <FxGlyph>fx</FxGlyph>
          <FxSep />
        </FormulaTools>
        <FormulaText>{FORMULA}</FormulaText>
        <FormulaDrop><Tri /></FormulaDrop>
      </FormulaBar>

      <ColHeader>
        <OutlineTop><LevelBtn>1</LevelBtn><LevelBtn>2</LevelBtn></OutlineTop>
        <Corner><svg width="13" height="12" viewBox="0 0 13 12"><path d="M13 0v12H0z" fill="#cfcfcf" /></svg></Corner>
        {HEAD.map(c => <ColCell key={c} $on={c === 'E'}>{c}</ColCell>)}
      </ColHeader>

      <Sheet>
        {rowsData.map(r => <SheetRow key={r.n} r={r} />)}
        <HScroll />
        <VScroll />
      </Sheet>

      <TabBar>
        <NavArrows><NavLeft /><NavRight /></NavArrows>
        <GuidesTab>Guides</GuidesTab>
        <ColorTab $w={161}>Assumptions Summary</ColorTab>
        <ColorTab $w={203}>Detailed Development Budget</ColorTab>
        <ColorTab $w={72}>Unit Mix</ColorTab>
        <ColorTab $w={209}>Detailed Expense Assumptions</ColorTab>
        <PlainTab $w={161}>Investment Summary</PlainTab>
        <PlainTab $w={138}>Annual Cash Flow</PlainTab>
        <ActiveTab>Monthly Cash Flow</ActiveTab>
        <PlainTab $w={140}>Sources and Uses</PlainTab>
        <PlainTab $w={134}>Project Financing</PlainTab>
        <PlainTab $w={92}>IRR Matrix</PlainTab>
        <PlainTab $w={119}>10Y Cash Flow</PlainTab>
        <FadeTab $w={107}><Fade>Draw Schedule</Fade></FadeTab>
        <PlusTab $w={38}>+</PlusTab>
      </TabBar>

      <StatusBar>
        <Ready>Ready</Ready>
        <StatusRight>
          <ViewBtn $w={37} $on><GridView /></ViewBtn>
          <ViewBtn $w={35}><PageView /></ViewBtn>
          <ViewBtn $w={35}><BreakView /></ViewBtn>
          <ZoomStep $w={24}>−</ZoomStep>
          <Slider />
          <ZoomStep $w={24}>+</ZoomStep>
          <ZoomText>90%</ZoomText>
        </StatusRight>
      </StatusBar>
    </Page>
  );
}
